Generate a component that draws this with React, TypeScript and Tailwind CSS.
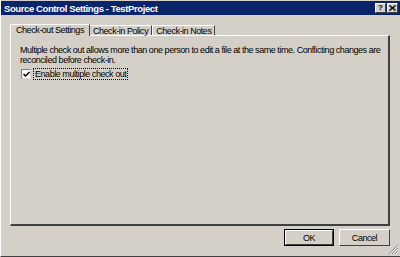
import React from "react";

const font = { fontFamily: '"Liberation Sans", Arial, sans-serif' };

export default function App() {
  return (
    <div
      className="relative w-[400px] h-[257px] bg-[#d4d0c8] overflow-hidden flex flex-col text-[9px] leading-[10px] tracking-[-0.45px] text-black border-b border-b-[#404040] border-l border-l-[#ffffff]"
      style={font}
    >
      {/* Title bar */}
      <div className="h-[14px] mt-[1px] bg-[#0a246a] flex items-center justify-between pl-[3px] pr-[2px]">
        <span className="text-white font-bold text-[9.5px] leading-[11px] tracking-[-0.4px]">
          Source Control Settings - TestProject
        </span>
        <div className="flex gap-[1px]">
          <div className="w-[11px] h-[10px] bg-[#d4d0c8] border-t border-l border-t-white border-l-white border-r border-b border-r-[#404040] border-b-[#404040] flex items-center justify-center text-[8px] leading-[8px] font-bold tracking-normal">
            ?
          </div>
          <div className="w-[11px] h-[10px] bg-[#d4d0c8] border-t border-l border-t-white border-l-white border-r border-b border-r-[#404040] border-b-[#404040] flex items-center justify-center">
            <svg width="7" height="6" viewBox="0 0 7 6">
              <path d="M0.5 0.5 L6.5 5.5 M6.5 0.5 L0.5 5.5" stroke="black" strokeWidth="1.4" />
            </svg>
          </div>
        </div>
      </div>

      {/* Tabs + panel */}
      <div className="pl-[9px] pr-[10px] pt-[8px]">
        <div className="flex items-end h-[12px] relative z-10">
          <div className="h-[12px] pl-[5px] pr-[5px] bg-[#d4d0c8] border-t border-l border-t-white border-l-white border-r border-r-[#404040] flex items-center mb-[-1px] pb-[1px]">
            Check-out Settings
          </div>
          <div className="h-[10px] px-[3px] border-t border-t-white border-r border-r-[#404040] flex items-center">
            Check-in Policy
          </div>
          <div className="h-[10px] px-[3px] border-t border-l border-t-white border-l-white border-r border-r-[#404040] flex items-center">
            Check-in Notes
          </div>
        </div>
        <div className="h-[191px] border-t border-l border-t-white border-l-white border-r-2 border-b-2 border-r-[#404040] border-b-[#404040] pl-[9px] pt-[9px] pr-[4px]">
          <p className="leading-[10px]">
            Multiple check out allows more than one person to edit a file at the same time. Conflicting changes are
            reconciled before check-in.
          </p>
          <div className="flex items-center mt-[3px] ml-[1px]">
            <div className="w-[10px] h-[10px] bg-white border border-t-[#808080] border-l-[#808080] border-r-[#d4d0c8] border-b-[#d4d0c8] flex items-center justify-center">
              <svg width="7" height="7" viewBox="0 0 7 7">
                <path d="M0.5 3 L2.5 5 L6.5 1" stroke="black" strokeWidth="1.5" fill="none" />
              </svg>
            </div>
            <span className="ml-[2px] px-[1px] border border-dotted border-black leading-[10px]">
              Enable multiple check out
            </span>
          </div>
        </div>
      </div>

      {/* Buttons */}
      <div className="flex justify-end gap-[5px] pr-[10px] mt-[3px]">
        <button className="w-[50px] h-[17px] border border-black flex">
          <div className="flex-1 border-t border-l border-t-white border-l-white border-r border-b border-r-[#404040] border-b-[#404040] flex items-center justify-center">
            OK
          </div>
        </button>
        <button className="w-[51px] h-[17px] border-t border-l border-t-white border-l-white border-r border-b border-r-[#404040] border-b-[#404040] flex items-center justify-center">
          Cancel
        </button>
      </div>

      {/* Size grip */}
      <svg className="absolute right-[1px] bottom-[1px]" width="11" height="11" viewBox="0 0 11 11">
        <path d="M10 1 L1 10 M10 4 L4 10 M10 7 L7 10" stroke="#808080" strokeWidth="1" />
        <path d="M10 2 L2 10 M10 5 L5 10 M10 8 L8 10" stroke="#ffffff" strokeWidth="1" />
      </svg>
    </div>
  );
}
